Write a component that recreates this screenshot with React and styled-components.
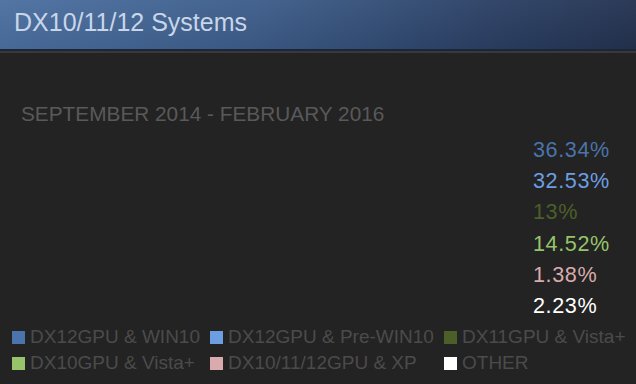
import React from 'react';
import styled, { createGlobalStyle } from 'styled-components';

const title = 'DX10/11/12 Systems';
const period = 'SEPTEMBER 2014 - FEBRUARY 2016';

const series = [
  { id: 1, label: 'DX12GPU & WIN10', value: '36.34%', color: '#4a74ab' },
  { id: 2, label: 'DX12GPU & Pre-WIN10', value: '32.53%', color: '#6d9ee2' },
  { id: 3, label: 'DX11GPU & Vista+', value: '13%', color: '#4d5f28' },
  { id: 4, label: 'DX10GPU & Vista+', value: '14.52%', color: '#97c46a' },
  { id: 5, label: 'DX10/11/12GPU & XP', value: '1.38%', color: '#d9abac' },
  { id: 6, label: 'OTHER', value: '2.23%', color: '#ffffff' },
];

const GlobalStyle = createGlobalStyle`
  html, body {
    margin: 0;
    padding: 0;
    height: 100%;
    background: #232323;
  }
  #root {
    height: 100%;
  }
`;

const App = () => {
  return (
    <>
      <GlobalStyle />
      <Panel>
        <Header>
          <Title>{title}</Title>
        </Header>
        <Body>
          <Period>{period}</Period>
          <Values>
            {series.map((item) => (
              <Value key={item.id} $color={item.color}>
                {item.value}
              </Value>
            ))}
          </Values>
          <Legend>
            {series.map((item) => (
              <LegendItem key={item.id}>
                <Swatch $color={item.color} />
                <span>{item.label}</span>
              </LegendItem>
            ))}
          </Legend>
        </Body>
      </Panel>
    </>
  );
};

const Panel = styled.div`
  display: flex;
  flex-direction: column;
  height: 100%;
  font-family: 'Liberation Sans', Arial, sans-serif;
`;

const Header = styled.div`
  height: 49px;
  flex-shrink: 0;
  padding-left: 14px;
  background:
    linear-gradient(180deg, rgba(255, 255, 255, 0.04) 0%, rgba(0, 0, 0, 0.06) 100%),
    linear-gradient(100deg, #4c70a1 0%, #3d5d8a 40%, #2c4166 75%, #23324f 100%);
  border-bottom: 2px solid #1b263a;
`;

const Title = styled.div`
  color: #c8d6e9;
  font-size: 25px;
  line-height: 45px;
`;

const Body = styled.div`
  flex: 1;
  display: flex;
  flex-direction: column;
  background: #232323;
  border-top: 2px solid #393939;
  padding-top: 49px;
`;

const Period = styled.div`
  padding-left: 21px;
  color: #595959;
  font-size: 20.8px;
  line-height: 24px;
`;

const Values = styled.div`
  align-self: flex-end;
  width: 78px;
  padding-right: 25px;
  margin-top: 8px;
  display: flex;
  flex-direction: column;
`;

const Value = styled.div`
  color: ${(p) => p.$color};
  font-size: 21.6px;
  letter-spacing: 0.6px;
  line-height: 31.2px;
  white-space: nowrap;
`;

const Legend = styled.div`
  display: grid;
  grid-template-columns: 198px 234px auto;
  padding-left: 12px;
  margin-top: 3px;
`;

const LegendItem = styled.div`
  display: flex;
  align-items: center;
  gap: 5px;
  height: 26px;
  color: #4b4b4b;
  font-size: 19px;
  white-space: nowrap;
`;

const Swatch = styled.span`
  width: 13px;
  height: 13px;
  flex-shrink: 0;
  background: ${(p) => p.$color};
`;

export default App;
